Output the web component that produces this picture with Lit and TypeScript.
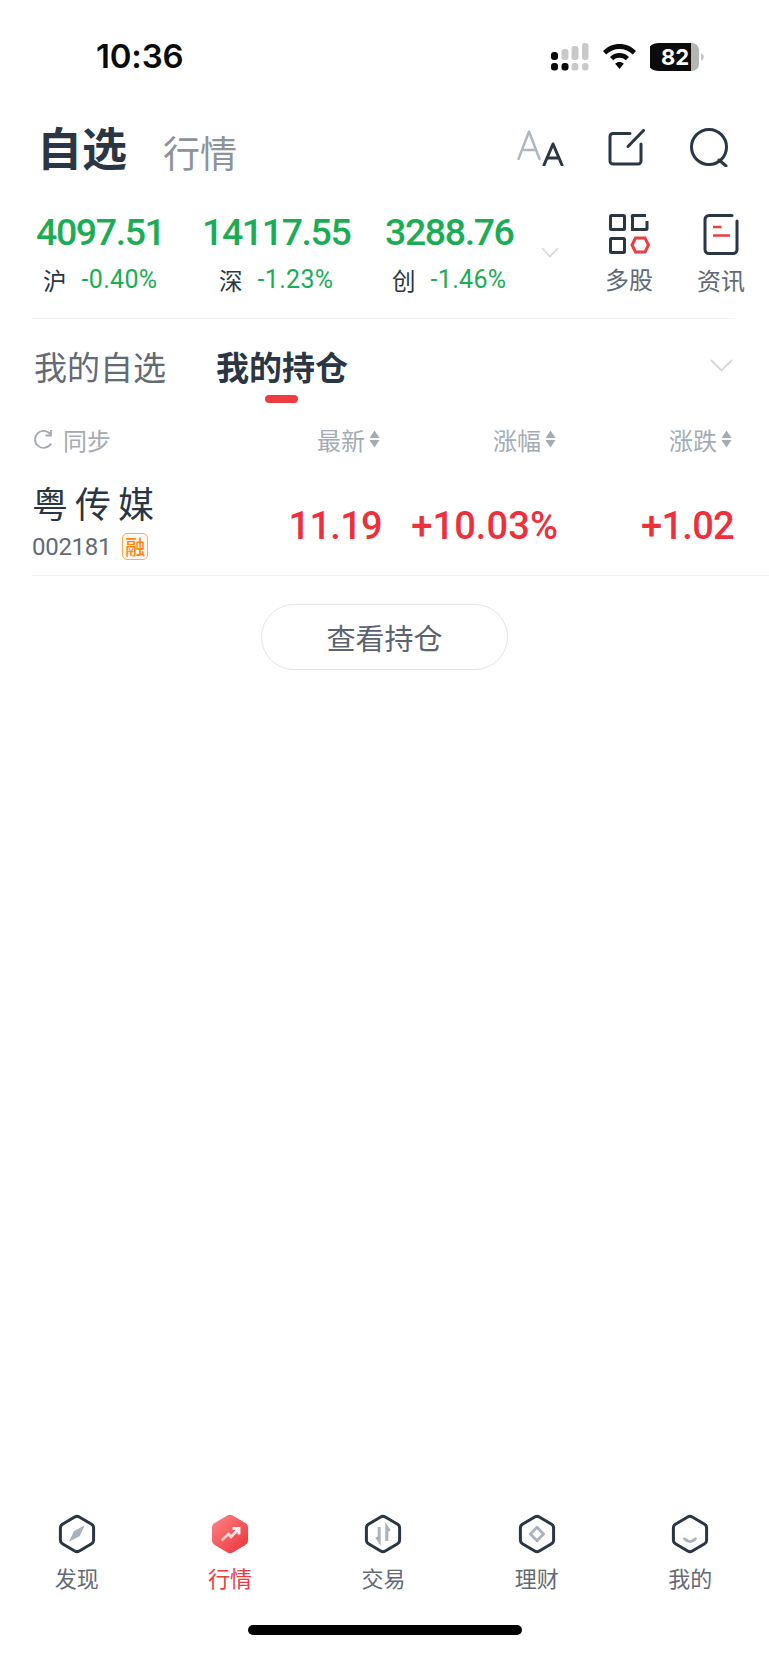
import { LitElement, html, css, svg } from "lit";
import { customElement } from "lit/decorators.js";

const HEX = "M16.700 3 Q19 1.700 21.300 3 L33.600 10.200 Q35.600 11.400 35.600 13.800 V26.200 Q35.600 28.600 33.600 29.800 L21.300 37 Q19 38.300 16.700 37 L4.400 29.800 Q2.400 28.600 2.400 26.200 V13.800 Q2.400 11.400 4.400 10.200 Z";
const sort = html`<svg class="sort" viewBox="0 0 11 20" width="11" height="20"><path d="M5.500 1.500 L10.500 9 H.5Z M5.500 18.500 L10.500 11 H.5Z" fill="#a4abb5"/></svg>`;

const tabs = [
  { label: "发现", inner: svg`<path d="M26.800 11.200 L21.800 22 L11 27.800 L16 17 Z" fill="#aab2bd"/>` },
  { label: "行情", active: true, inner: svg`` },
  { label: "交易", inner: svg`<path d="M15.200 13 V27 L12.600 23 M22.800 27 V13 L25.400 17" fill="none" stroke="#aab2bd" stroke-width="3"/>` },
  { label: "理财", inner: svg`<path d="M19 13.200 L25.600 20 L19 26.800 L12.400 20 Z" fill="none" stroke="#aab2bd" stroke-width="2.800" stroke-linejoin="round"/>` },
  { label: "我的", inner: svg`<path d="M13.500 24.800 Q19 30.600 24.500 24.800" fill="none" stroke="#aab2bd" stroke-width="2.800" stroke-linecap="round"/>` },
];

const indices = [
  { v: "4097.51", n: "沪", p: "-0.40%" },
  { v: "14117.55", n: "深", p: "-1.23%" },
  { v: "3288.76", n: "创", p: "-1.46%" },
];

@customElement("app-root")
export class AppRoot extends LitElement {
  static styles = css`
    :host { display: block; width: 769px; height: 1665px; background: #fff; color: #2a3644;
      font-family: "Noto Sans CJK SC", "Noto Sans", sans-serif; overflow: hidden; }
    .page { height: 100%; display: flex; flex-direction: column; }
    svg { display: block; flex: none; }
    .num { font-family: Roboto, "Noto Sans", sans-serif; }

    .status { height: 112px; flex: none; display: flex; align-items: center; padding: 0 65px 0 96px; }
    .time { font-family: Inter, sans-serif; font-weight: 600; font-size: 33px; letter-spacing: -0.2px; color: #0b0b0b; line-height: 40px; }
    .status-icons { margin-left: auto; margin-top: 2px; display: flex; align-items: center; gap: 14px; }
    .battery { width: 54px; height: 28px; }

    .head { height: 76px; flex: none; display: flex; align-items: center; padding: 0 39px 0 37px; position: relative; }
    .title { font-size: 45px; font-weight: 700; line-height: 60px; margin-top: -7px; }
    .title2 { font-size: 37px; color: #8d939c; margin-left: 36px; line-height: 60px; padding-top: 3px; }
    .head-icons { margin-left: auto; margin-top: -5px; display: flex; align-items: center; }

    .indices { height: 131px; flex: none; box-sizing: border-box; margin: 0 34px 0 32px; padding-left: 4px;
      border-bottom: 1px solid #f2f3f5; display: grid; grid-template-columns: 166px 183px 156px 63px 92px 1fr; }
    .index { width: fit-content; display: flex; flex-direction: column; align-items: center; padding-top: 20px; }
    .index .v { font-size: 37.500px; font-weight: 500; letter-spacing: -1.400px; color: #1aad55; line-height: 48px; }
    .index .s { display: flex; align-items: center; gap: 15px; font-size: 23.500px; line-height: 48px; }
    .index .s .n { color: #2a3644; }
    .index .s .p { color: #1aad55; font-size: 25px; letter-spacing: 0.3px; }
    .chev { align-self: start; margin-top: 59px; }
    .tool { display: flex; flex-direction: column; align-items: center; padding-top: 26px; font-size: 24px; color: #636a76; line-height: 34px; gap: 8px; width: 50px; }

    .subtabs { height: 89px; flex: none; box-sizing: border-box; display: flex; align-items: flex-start; padding: 23px 36px 0 34px; font-size: 33px; line-height: 48px; color: #636a76; }
    .subtabs .on { position: relative; margin-left: 50px; font-weight: 700; color: #2a3644; }
    .subtabs .on::after { content: ""; position: absolute; left: 49px; top: 53px; width: 33px; height: 8px; border-radius: 4px; background: #ef3b42; }
    .subtabs svg { margin: 17px 0 0 auto; }

    .cols { display: grid; grid-template-columns: 1fr 176px 176px 176px; padding: 0 37px 0 32px; align-items: center; }
    .thead { height: 66px; flex: none; color: #a4abb5; font-size: 24px; padding-bottom: 4px; box-sizing: border-box; }
    .th { display: flex; justify-content: flex-end; align-items: center; gap: 4px; }
    .sync { display: flex; align-items: center; gap: 10px; padding-left: 2px; }
    .row { height: 102px; flex: none; box-sizing: border-box; border-bottom: 1px solid #f0f1f3; padding: 0 35px 0 0; margin-left: 32px; }
    .info { margin-top: -10px; }
    .name { font-size: 36px; letter-spacing: 7px; line-height: 48px; }
    .code-line { display: flex; align-items: center; gap: 11px; margin-top: 6px; }
    .code { font-size: 24px; letter-spacing: -0.3px; color: #636a76; line-height: 30px; }
    .badge { box-sizing: border-box; width: 26px; height: 27px; border: 1.500px solid #ffab5c; border-radius: 5px; background: #fff9f2; color: #ff8414; font-size: 20px; font-weight: 500; line-height: 24px; display: flex; align-items: center; justify-content: center; }
    .val { text-align: right; color: #ee2f3c; font-size: 38px; font-weight: 500; letter-spacing: -0.7px; line-height: 48px; padding-top: 2px; white-space: nowrap; }
    .val.wide { letter-spacing: 0.1px; }

    .btn { align-self: flex-start; margin: 28px 0 0 261px; box-sizing: border-box; width: 247px; height: 66px; border: 1px solid #e3e5e8; border-radius: 33px;
      display: flex; align-items: center; justify-content: center; font-size: 29px; color: #5b6270; background: #fff; }

    .spacer { flex: 1; }
    .tabbar { flex: none; display: grid; grid-template-columns: repeat(5, 153.400px); }
    .tab { display: flex; flex-direction: column; align-items: center; font-size: 22px; color: #636a76; line-height: 32px; gap: 7px; }
    .tab.on { color: #ef3b42; }
    .home { flex: none; height: 25px; display: flex; justify-content: center; padding: 32px 0 15px; }
    .home i { display: block; width: 274px; height: 10px; border-radius: 5px; background: #000; }
  `;

  render() {
    return html`<div class="page">
      <div class="status">
        <span class="time">10:36</span>
        <div class="status-icons">
          <svg width="40" height="28" viewBox="-1 0 40 28">
            <g fill="#c9c9c9">
              <rect x="11.500" y="6" width="7" height="11" rx="3"/><rect x="21.500" y="3" width="7" height="14" rx="3"/><rect x="32" y="0" width="6.500" height="17" rx="3"/>
              <rect x="21.500" y="20" width="7" height="7.500" rx="3"/><rect x="32" y="20" width="6.500" height="7.500" rx="3"/>
            </g>
            <g fill="#0b0b0b"><rect x="1" y="9" width="7" height="8" rx="3"/><rect x="1" y="20" width="7" height="7.500" rx="3"/><rect x="11.500" y="20" width="7" height="7.500" rx="3"/></g>
          </svg>
          <svg width="33" height="26" viewBox="0 0 33 26">
            <path d="M16.500 0 C23 0 28.500 2.500 33 7 L29.800 10.500 C26.300 7 21.700 5 16.500 5 C11.300 5 6.700 7 3.200 10.500 L0 7 C4.500 2.500 10 0 16.500 0Z M16.500 9 C20.200 9 23.500 10.400 26 12.900 L22.800 16.300 C21.100 14.600 19 13.800 16.500 13.800 C14 13.800 11.900 14.600 10.200 16.300 L7 12.900 C9.500 10.400 12.800 9 16.500 9Z M16.500 18 C18.200 18 19.700 18.600 20.800 19.800 L16.500 25 L12.200 19.800 C13.300 18.600 14.800 18 16.500 18Z" fill="#0b0b0b"/>
          </svg>
          <svg class="battery" viewBox="0 0 54 28">
            <path d="M9 0 H41 V28 H9 A9 9 0 0 1 9 0Z" fill="#0b0b0b"/>
            <path d="M41 0 H42 A7 7 0 0 1 49 7 V21 A7 7 0 0 1 42 28 H41Z" fill="#b5b5b5"/>
            <path d="M51 10 Q54 12 54 14 Q54 16 51 18Z" fill="#c4c4c4"/>
            <text x="25" y="21.500" text-anchor="middle" font-family="Inter, sans-serif" font-weight="700" font-size="22" fill="#fff">82</text>
          </svg>
        </div>
      </div>

      <div class="head">
        <span class="title">自选</span><span class="title2">行情</span>
        <div class="head-icons">
          <svg width="47" height="36" viewBox="0 0 47 36" style="margin-right:44px">
            <path d="M1.500 29 L12 1.500 L22.500 29 M5 20 H19" fill="none" stroke="#aeb6c0" stroke-width="2.400" stroke-linecap="round" stroke-linejoin="round"/>
            <path d="M27 35 L36 14 L45 35 M30.500 28 H41.500" fill="none" stroke="#2a3644" stroke-width="3" stroke-linecap="round" stroke-linejoin="round"/>
          </svg>
          <svg width="37" height="37" viewBox="0 0 37 37" style="margin-right:44px">
            <path d="M22 4.500 H5 A3 3 0 0 0 2 7.500 V32 A3 3 0 0 0 5 35 H30 A3 3 0 0 0 33 32 V15" fill="none" stroke="#2a3644" stroke-width="3" stroke-linecap="round"/>
            <path d="M20 17.500 L35.500 1.500" fill="none" stroke="#2a3644" stroke-width="3" stroke-linecap="round"/>
          </svg>
          <svg width="41" height="39" viewBox="0 0 41 39">
            <circle cx="20" cy="19" r="17.500" fill="none" stroke="#2a3644" stroke-width="3"/>
            <path d="M30 32 L37 38" fill="none" stroke="#2a3644" stroke-width="3" stroke-linecap="round"/>
          </svg>
        </div>
      </div>

      <div class="indices">
        ${indices.map(i => html`<div class="index">
          <span class="v num">${i.v}</span>
          <span class="s"><span class="n">${i.n}</span><span class="p num">${i.p}</span></span>
        </div>`)}
        <svg class="chev" width="18" height="11" viewBox="0 0 18 11"><path d="M1 1 L9 9.500 L17 1" fill="none" stroke="#d3d7dc" stroke-width="1.600"/></svg>
        <div class="tool">
          <svg width="41" height="40" viewBox="0 0 41 40">
            <g fill="none" stroke="#2a3644" stroke-width="3">
              <rect x="1.500" y="1.500" width="14" height="14" rx="1"/><rect x="1.500" y="24.500" width="14" height="14" rx="1"/>
              <path d="M37 1.500 H25 A1 1 0 0 0 23.500 3 V15.500 H37 A1 1 0 0 0 38 14.500 V7"/>
            </g>
            <path d="M26.500 24 H36 L39.500 31 L36 38 H26.500 L23 31 Z" fill="none" stroke="#ef3b42" stroke-width="3"/>
          </svg>
          <span>多股</span>
        </div>
        <div class="tool">
          <svg width="36" height="41" viewBox="0 0 36 41">
            <path d="M29 1.500 H6 A4 4 0 0 0 2 5.500 V35.500 A4 4 0 0 0 6 39.500 H30 A4 4 0 0 0 34 35.500 V7" fill="none" stroke="#2a3644" stroke-width="3" stroke-linecap="round"/>
            <path d="M10 13 H18.500 M10 21.500 H27" stroke="#ef3b42" stroke-width="2.600"/>
          </svg>
          <span>资讯</span>
        </div>
      </div>

      <div class="subtabs">
        <span>我的自选</span><span class="on">我的持仓</span>
        <svg width="23" height="13" viewBox="0 0 23 13"><path d="M1 1 L11.500 11.500 L22 1" fill="none" stroke="#d3d7dc" stroke-width="1.800"/></svg>
      </div>

      <div class="cols thead">
        <div class="sync">
          <svg width="19" height="20" viewBox="0 0 19 20"><path d="M16.500 5.500 A8.500 8.500 0 1 0 17 14.500 M17 1 V6.500 H11.500" fill="none" stroke="#a4abb5" stroke-width="1.800"/></svg>
          <span>同步</span>
        </div>
        <div class="th">最新${sort}</div>
        <div class="th">涨幅${sort}</div>
        <div class="th">涨跌${sort}</div>
      </div>

      <div class="cols row">
        <div class="info">
          <div class="name">粤传媒</div>
          <div class="code-line"><span class="code num">002181</span><span class="badge">融</span></div>
        </div>
        <div class="val num">11.19</div>
        <div class="val wide num">+10.03%</div>
        <div class="val num">+1.02</div>
      </div>

      <div class="btn">查看持仓</div>

      <div class="spacer"></div>

      <div class="tabbar">
        ${tabs.map(t => html`<div class="tab ${t.active ? "on" : ""}">
          <svg width="38" height="40" viewBox="0 0 38 40">
            ${t.active
              ? svg`<defs><linearGradient id="rg" x1="0" y1="0" x2="1" y2="1"><stop offset="0" stop-color="#ff8185"/><stop offset="1" stop-color="#ea3539"/></linearGradient>
                  <linearGradient id="wg" x1="0" y1="1" x2="1" y2="0"><stop offset="0" stop-color="#fff" stop-opacity=".55"/><stop offset="1" stop-color="#fff"/></linearGradient></defs>
                <path d="${HEX}" fill="url(#rg)" stroke="url(#rg)" stroke-width="3" stroke-linejoin="round"/>
                <path d="M10.500 26.500 L17.500 20 L20 23 L27 15.500 M21.500 14.500 H28 V20.500" fill="none" stroke="url(#wg)" stroke-width="2.800"/>`
              : svg`<path d="${HEX}" fill="none" stroke="#2a3644" stroke-width="3" stroke-linejoin="round"/>${t.inner}`}
          </svg>
          <span>${t.label}</span>
        </div>`)}
      </div>
      <div class="home"><i></i></div>
    </div>`;
  }
}
